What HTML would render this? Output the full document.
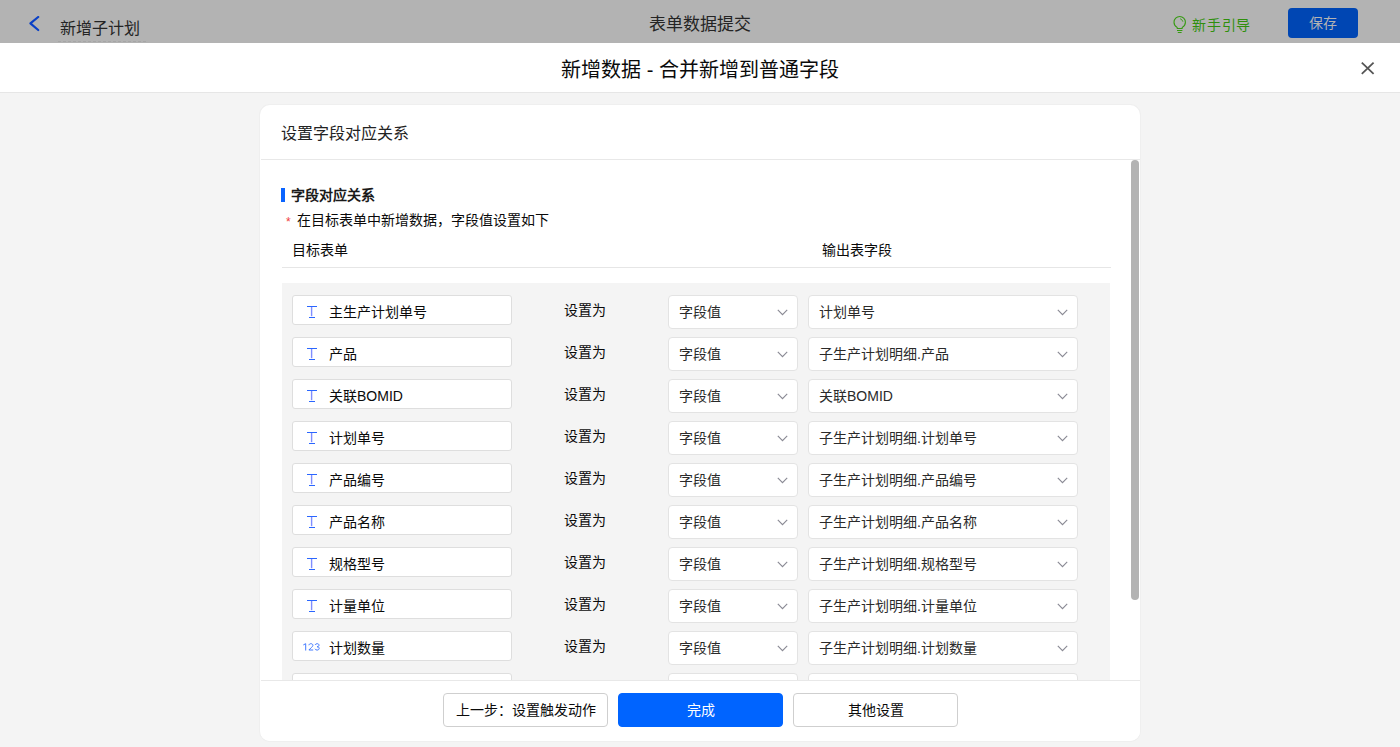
<!DOCTYPE html>
<html lang="zh-CN"><head><meta charset="utf-8">
<style>
*{margin:0;padding:0;box-sizing:border-box}
html,body{width:1400px;height:747px;overflow:hidden;background:#f4f4f4;font-family:"Liberation Sans",sans-serif;color:#333}
.abs{position:absolute}
#topbar{position:absolute;left:0;top:0;width:1400px;height:43px;background:#b3b3b3}
#topbar .back{position:absolute;left:28px;top:16px}
#topbar .pname{position:absolute;left:60px;top:19px;font-size:16px;line-height:20px;color:#242424;white-space:nowrap}
#topbar .uline{position:absolute;left:58px;top:41px;width:88px;height:0;border-top:1px dashed #a6a6a6}
#topbar .ttl{position:absolute;left:0;width:1400px;text-align:center;top:15px;font-size:17px;line-height:20px;color:#242424}
#topbar .guide{position:absolute;left:1172px;top:15px;}
#topbar .gtxt{position:absolute;left:1192px;top:15px;font-size:14px;letter-spacing:0.8px;line-height:20px;color:#2f8f0c;white-space:nowrap}
#topbar .save{position:absolute;left:1288px;top:8px;width:70px;height:30px;border-radius:4px;background:#0046b3;color:#b3b3b3;font-size:14px;line-height:30px;text-align:center}
#mhead{position:absolute;left:0;top:43px;width:1400px;height:50px;background:#fff;border-bottom:1px solid #e6e6e6}
#mhead .t{position:absolute;left:0;width:1400px;top:15px;text-align:center;font-size:20px;line-height:24px;color:#0a0a0a}
#mhead .x{position:absolute;left:1360px;top:18px}
#card{position:absolute;left:260px;top:105px;width:880px;height:636px;background:#fff;border-radius:10px;box-shadow:0 0 0 1px #efefef;overflow:hidden}
#cin{position:absolute;left:1px;top:1px;width:879px;height:635px}
#card .ch{position:absolute;left:20px;top:17px;font-size:16px;line-height:22px;color:#222;white-space:nowrap}
#card .hdiv{position:absolute;left:0;top:53px;width:879px;height:1px;background:#e8e8e8}
#scroll{position:absolute;left:0;top:54px;width:878px;height:520px;overflow:hidden}
.sbar{position:absolute;left:870px;top:0;width:8px;height:440px;border-radius:4px;background:#b3b3b3}
.bluebar{position:absolute;left:20px;top:28px;width:4px;height:14px;background:#0a64ff}
.sec{position:absolute;left:30px;top:25px;font-size:14px;line-height:20px;font-weight:bold;color:#1a1a1a;white-space:nowrap}
.req{position:absolute;left:25px;top:55px;font-size:12px;line-height:14px;color:#f04040}
.desc{position:absolute;left:36px;top:50px;font-size:14px;line-height:20px;color:#0a0a0a;white-space:nowrap}
.colh1{position:absolute;left:31px;top:80px;font-size:14px;line-height:20px;color:#0a0a0a;white-space:nowrap}
.colh2{position:absolute;left:561px;top:80px;font-size:14px;line-height:20px;color:#0a0a0a;white-space:nowrap}
.cdiv{position:absolute;left:21px;top:107px;width:829px;height:1px;background:#e6e6e6}
.grey{position:absolute;left:21px;top:123px;width:828px;height:420px;background:#f4f4f4}
.row{position:absolute;left:0;width:829px;height:42px}
.inp{position:absolute;left:10px;top:0;width:220px;height:30px;background:#fff;border:1px solid #dedede;border-radius:3px}
.ticon{position:absolute;left:13px;top:10px}
.nicon{position:absolute;left:9px;top:10px}
.nm{position:absolute;left:36px;top:6px;font-size:14px;line-height:20px;color:#0a0a0a;white-space:nowrap}
.setas{position:absolute;left:282px;top:5px;font-size:14px;line-height:20px;color:#0a0a0a}
.sel{position:absolute;top:0;height:34px;background:#fff;border:1px solid #e3e3e3;border-radius:4px}
.s1{left:386px;width:130px}
.s2{left:526px;width:270px}
.st{position:absolute;left:10px;top:6px;font-size:14px;line-height:20px;color:#2a2a2a;white-space:nowrap}
.chev{position:absolute;right:9px;top:13px}
#foot{position:absolute;left:0;top:574px;width:879px;height:61px;border-top:1px solid #e8e8e8;background:#fff}
.btn{position:absolute;top:12px;width:165px;height:34px;border-radius:4px;font-size:14px;line-height:32px;text-align:center;border:1px solid #cfcfcf;color:#0a0a0a;background:#fff;white-space:nowrap}
.b1{left:182px}
.b2{left:357px;background:#0064ff;border-color:#0064ff;color:#fff}
.b3{left:532px}
</style></head><body>
<div id="topbar">
 <svg class="back" width="13" height="17" viewBox="0 0 13 17"><path d="M10.2 1 L2.4 7.4 L10.2 14" fill="none" stroke="#0a40c6" stroke-width="2.2" stroke-linecap="round" stroke-linejoin="round"/></svg>
 <div class="pname">新增子计划</div>
 <div class="uline"></div>
 <div class="ttl">表单数据提交</div>
 <svg class="guide" width="16" height="20" viewBox="0 0 16 20"><path d="M5.1 12.4 C3.4 11.3 2 9.4 2 7.2 C2 4.05 4.55 1.5 7.7 1.5 C10.85 1.5 13.4 4.05 13.4 7.2 C13.4 9.4 12 11.3 10.3 12.4 L10.1 13.5 L5.3 13.5 Z" fill="none" stroke="#369a12" stroke-width="1.1"/><path d="M5 15.5 H10.4 M5.8 17.5 H9.6" stroke="#369a12" stroke-width="1.1"/><path d="M8.2 3.8 C9.5 4.3 10.5 5.3 10.8 6.6" fill="none" stroke="#369a12" stroke-width="1"/></svg>
 <div class="gtxt">新手引导</div>
 <div class="save">保存</div>
</div>
<div id="mhead">
 <div class="t">新增数据 - 合并新增到普通字段</div>
 <svg class="x" width="16" height="15" viewBox="0 0 16 15"><path d="M1.8 1.6 L13.6 12.8 M13.6 1.6 L1.8 12.8" stroke="#555" stroke-width="1.8" fill="none"/></svg>
</div>
<div id="card"><div id="cin">
 <div class="ch">设置字段对应关系</div>
 <div class="hdiv"></div>
 <div id="scroll">
  <div class="bluebar"></div>
  <div class="sec">字段对应关系</div>
  <div class="req">*</div>
  <div class="desc">在目标表单中新增数据，字段值设置如下</div>
  <div class="colh1">目标表单</div>
  <div class="colh2">输出表字段</div>
  <div class="cdiv"></div>
  <div class="grey">
<div class="row" style="top:12px">
<div class="inp"><svg class="ticon" width="12" height="13" viewBox="0 0 12 13"><path d="M1 0.5H11M3 11.5H9" fill="none" stroke="#2a66ff" stroke-width="1.1"/><path d="M5.6 1V10.2" fill="none" stroke="#7f8dff" stroke-width="1.4"/></svg><span class="nm">主生产计划单号</span></div>
<div class="setas">设置为</div>
<div class="sel s1"><span class="st">字段值</span><svg class="chev" width="11" height="7" viewBox="0 0 11 7"><path d="M0.8 0.9 L5.5 5.6 L10.2 0.9" fill="none" stroke="#8a8a94" stroke-width="1.15"/></svg></div>
<div class="sel s2"><span class="st">计划单号</span><svg class="chev" width="11" height="7" viewBox="0 0 11 7"><path d="M0.8 0.9 L5.5 5.6 L10.2 0.9" fill="none" stroke="#8a8a94" stroke-width="1.15"/></svg></div>
</div>
<div class="row" style="top:54px">
<div class="inp"><svg class="ticon" width="12" height="13" viewBox="0 0 12 13"><path d="M1 0.5H11M3 11.5H9" fill="none" stroke="#2a66ff" stroke-width="1.1"/><path d="M5.6 1V10.2" fill="none" stroke="#7f8dff" stroke-width="1.4"/></svg><span class="nm">产品</span></div>
<div class="setas">设置为</div>
<div class="sel s1"><span class="st">字段值</span><svg class="chev" width="11" height="7" viewBox="0 0 11 7"><path d="M0.8 0.9 L5.5 5.6 L10.2 0.9" fill="none" stroke="#8a8a94" stroke-width="1.15"/></svg></div>
<div class="sel s2"><span class="st">子生产计划明细.产品</span><svg class="chev" width="11" height="7" viewBox="0 0 11 7"><path d="M0.8 0.9 L5.5 5.6 L10.2 0.9" fill="none" stroke="#8a8a94" stroke-width="1.15"/></svg></div>
</div>
<div class="row" style="top:96px">
<div class="inp"><svg class="ticon" width="12" height="13" viewBox="0 0 12 13"><path d="M1 0.5H11M3 11.5H9" fill="none" stroke="#2a66ff" stroke-width="1.1"/><path d="M5.6 1V10.2" fill="none" stroke="#7f8dff" stroke-width="1.4"/></svg><span class="nm">关联BOMID</span></div>
<div class="setas">设置为</div>
<div class="sel s1"><span class="st">字段值</span><svg class="chev" width="11" height="7" viewBox="0 0 11 7"><path d="M0.8 0.9 L5.5 5.6 L10.2 0.9" fill="none" stroke="#8a8a94" stroke-width="1.15"/></svg></div>
<div class="sel s2"><span class="st">关联BOMID</span><svg class="chev" width="11" height="7" viewBox="0 0 11 7"><path d="M0.8 0.9 L5.5 5.6 L10.2 0.9" fill="none" stroke="#8a8a94" stroke-width="1.15"/></svg></div>
</div>
<div class="row" style="top:138px">
<div class="inp"><svg class="ticon" width="12" height="13" viewBox="0 0 12 13"><path d="M1 0.5H11M3 11.5H9" fill="none" stroke="#2a66ff" stroke-width="1.1"/><path d="M5.6 1V10.2" fill="none" stroke="#7f8dff" stroke-width="1.4"/></svg><span class="nm">计划单号</span></div>
<div class="setas">设置为</div>
<div class="sel s1"><span class="st">字段值</span><svg class="chev" width="11" height="7" viewBox="0 0 11 7"><path d="M0.8 0.9 L5.5 5.6 L10.2 0.9" fill="none" stroke="#8a8a94" stroke-width="1.15"/></svg></div>
<div class="sel s2"><span class="st">子生产计划明细.计划单号</span><svg class="chev" width="11" height="7" viewBox="0 0 11 7"><path d="M0.8 0.9 L5.5 5.6 L10.2 0.9" fill="none" stroke="#8a8a94" stroke-width="1.15"/></svg></div>
</div>
<div class="row" style="top:180px">
<div class="inp"><svg class="ticon" width="12" height="13" viewBox="0 0 12 13"><path d="M1 0.5H11M3 11.5H9" fill="none" stroke="#2a66ff" stroke-width="1.1"/><path d="M5.6 1V10.2" fill="none" stroke="#7f8dff" stroke-width="1.4"/></svg><span class="nm">产品编号</span></div>
<div class="setas">设置为</div>
<div class="sel s1"><span class="st">字段值</span><svg class="chev" width="11" height="7" viewBox="0 0 11 7"><path d="M0.8 0.9 L5.5 5.6 L10.2 0.9" fill="none" stroke="#8a8a94" stroke-width="1.15"/></svg></div>
<div class="sel s2"><span class="st">子生产计划明细.产品编号</span><svg class="chev" width="11" height="7" viewBox="0 0 11 7"><path d="M0.8 0.9 L5.5 5.6 L10.2 0.9" fill="none" stroke="#8a8a94" stroke-width="1.15"/></svg></div>
</div>
<div class="row" style="top:222px">
<div class="inp"><svg class="ticon" width="12" height="13" viewBox="0 0 12 13"><path d="M1 0.5H11M3 11.5H9" fill="none" stroke="#2a66ff" stroke-width="1.1"/><path d="M5.6 1V10.2" fill="none" stroke="#7f8dff" stroke-width="1.4"/></svg><span class="nm">产品名称</span></div>
<div class="setas">设置为</div>
<div class="sel s1"><span class="st">字段值</span><svg class="chev" width="11" height="7" viewBox="0 0 11 7"><path d="M0.8 0.9 L5.5 5.6 L10.2 0.9" fill="none" stroke="#8a8a94" stroke-width="1.15"/></svg></div>
<div class="sel s2"><span class="st">子生产计划明细.产品名称</span><svg class="chev" width="11" height="7" viewBox="0 0 11 7"><path d="M0.8 0.9 L5.5 5.6 L10.2 0.9" fill="none" stroke="#8a8a94" stroke-width="1.15"/></svg></div>
</div>
<div class="row" style="top:264px">
<div class="inp"><svg class="ticon" width="12" height="13" viewBox="0 0 12 13"><path d="M1 0.5H11M3 11.5H9" fill="none" stroke="#2a66ff" stroke-width="1.1"/><path d="M5.6 1V10.2" fill="none" stroke="#7f8dff" stroke-width="1.4"/></svg><span class="nm">规格型号</span></div>
<div class="setas">设置为</div>
<div class="sel s1"><span class="st">字段值</span><svg class="chev" width="11" height="7" viewBox="0 0 11 7"><path d="M0.8 0.9 L5.5 5.6 L10.2 0.9" fill="none" stroke="#8a8a94" stroke-width="1.15"/></svg></div>
<div class="sel s2"><span class="st">子生产计划明细.规格型号</span><svg class="chev" width="11" height="7" viewBox="0 0 11 7"><path d="M0.8 0.9 L5.5 5.6 L10.2 0.9" fill="none" stroke="#8a8a94" stroke-width="1.15"/></svg></div>
</div>
<div class="row" style="top:306px">
<div class="inp"><svg class="ticon" width="12" height="13" viewBox="0 0 12 13"><path d="M1 0.5H11M3 11.5H9" fill="none" stroke="#2a66ff" stroke-width="1.1"/><path d="M5.6 1V10.2" fill="none" stroke="#7f8dff" stroke-width="1.4"/></svg><span class="nm">计量单位</span></div>
<div class="setas">设置为</div>
<div class="sel s1"><span class="st">字段值</span><svg class="chev" width="11" height="7" viewBox="0 0 11 7"><path d="M0.8 0.9 L5.5 5.6 L10.2 0.9" fill="none" stroke="#8a8a94" stroke-width="1.15"/></svg></div>
<div class="sel s2"><span class="st">子生产计划明细.计量单位</span><svg class="chev" width="11" height="7" viewBox="0 0 11 7"><path d="M0.8 0.9 L5.5 5.6 L10.2 0.9" fill="none" stroke="#8a8a94" stroke-width="1.15"/></svg></div>
</div>
<div class="row" style="top:348px">
<div class="inp"><svg class="nicon" width="19" height="10" viewBox="0 0 19 10"><path d="M1.3 2.4 L3.7 1 V8.6 M6.9 2.7 C7 1.6 7.8 1 8.9 1 C10.1 1 10.9 1.8 10.9 2.8 C10.9 3.8 10.2 4.5 9.3 5.3 L6.9 8 H11.2 M13.1 2.3 C13.4 1.5 14.2 1 15.2 1 C16.3 1 17 1.7 17 2.6 C17 3.6 16.2 4.4 15 4.4 C16.4 4.4 17.2 5.1 17.2 6.2 C17.2 7.3 16.3 8.1 15.1 8.1 C14.1 8.1 13.3 7.6 13 6.7" fill="none" stroke="#3a74ff" stroke-width="1" transform="translate(0,0.8) scale(1,0.9)"/></svg><span class="nm">计划数量</span></div>
<div class="setas">设置为</div>
<div class="sel s1"><span class="st">字段值</span><svg class="chev" width="11" height="7" viewBox="0 0 11 7"><path d="M0.8 0.9 L5.5 5.6 L10.2 0.9" fill="none" stroke="#8a8a94" stroke-width="1.15"/></svg></div>
<div class="sel s2"><span class="st">子生产计划明细.计划数量</span><svg class="chev" width="11" height="7" viewBox="0 0 11 7"><path d="M0.8 0.9 L5.5 5.6 L10.2 0.9" fill="none" stroke="#8a8a94" stroke-width="1.15"/></svg></div>
</div>
<div class="row" style="top:390px">
<div class="inp"><svg class="ticon" width="12" height="13" viewBox="0 0 12 13"><path d="M1 0.5H11M3 11.5H9" fill="none" stroke="#2a66ff" stroke-width="1.1"/><path d="M5.6 1V10.2" fill="none" stroke="#7f8dff" stroke-width="1.4"/></svg><span class="nm"></span></div>
<div class="setas">设置为</div>
<div class="sel s1"><span class="st">字段值</span><svg class="chev" width="11" height="7" viewBox="0 0 11 7"><path d="M0.8 0.9 L5.5 5.6 L10.2 0.9" fill="none" stroke="#8a8a94" stroke-width="1.15"/></svg></div>
<div class="sel s2"><span class="st"></span><svg class="chev" width="11" height="7" viewBox="0 0 11 7"><path d="M0.8 0.9 L5.5 5.6 L10.2 0.9" fill="none" stroke="#8a8a94" stroke-width="1.15"/></svg></div>
</div>
  </div>
  <div class="sbar"></div>
 </div>
 <div id="foot">
  <div class="btn b1">上一步：设置触发动作</div>
  <div class="btn b2">完成</div>
  <div class="btn b3">其他设置</div>
 </div>
</div></div>
</body></html>
